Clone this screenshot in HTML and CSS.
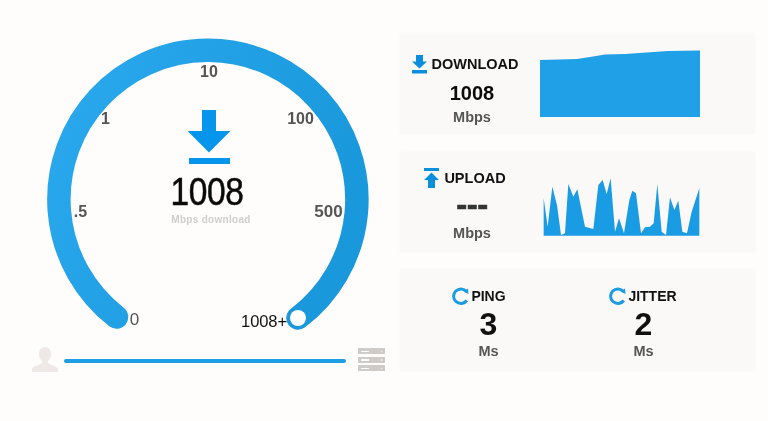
FILE: index.html
```html
<!DOCTYPE html>
<html lang="en">
<head>
<meta charset="utf-8">
<title>Speed test</title>
<link rel="stylesheet" href="styles.css">
</head>
<body>
<main class="page">
  <section class="left">
    <svg class="gauge" viewBox="0 0 400 335" width="400" height="335">
      <defs>
        <linearGradient id="arcGrad" x1="0" y1="0" x2="1" y2="0.4">
          <stop offset="0" stop-color="#2aa9ee"/>
          <stop offset="1" stop-color="#1998dc"/>
        </linearGradient>
      </defs>
      <path class="arc" d="M116.500 317 A149 149 0 1 1 298 318"/>
      <circle class="knob" cx="298" cy="318" r="8"/>
      <path class="big-icon" d="M202 110h14v21h14.500l-21.500 21.500-21.500-21.500h14.500z"/>
      <rect class="big-icon" x="189" y="158" width="41" height="6"/>
      <text class="tick" x="209" y="77" text-anchor="middle">10</text>
      <text class="tick" x="105.500" y="124" text-anchor="middle">1</text>
      <text class="tick" x="300.500" y="124" text-anchor="middle">100</text>
      <text class="tick" x="80.500" y="217" text-anchor="middle">.5</text>
      <text class="tick tick-wide" x="328.500" y="217" text-anchor="middle">500</text>
      <text class="tick-zero" x="134.500" y="325" text-anchor="middle">0</text>
      <text class="tick-max" x="264" y="327" text-anchor="middle">1008+</text>
      <text class="speed" transform="translate(207 205) scale(.86 1)" text-anchor="middle">1008</text>
      <text class="speed-unit" x="211" y="223" text-anchor="middle">Mbps download</text>
    </svg>
    <div class="route">
      <svg class="user" viewBox="0 0 26 25" width="26" height="25">
        <path d="M13 0c4 0 6 3 6 7 0 3-1 5-3 7v2c2 2 9 3 10 6v3H0v-3c1-3 8-4 10-6v-2c-2-2-3-4-3-7 0-4 2-7 6-7z"/>
      </svg>
      <div class="route-line"></div>
      <div class="server">
        <span class="server-unit"></span>
        <span class="server-unit"></span>
        <span class="server-unit"></span>
      </div>
    </div>
  </section>

  <section class="right">
    <article class="panel panel-download">
      <div class="info">
        <h2 class="title">
          <svg class="ico" viewBox="0 0 15 20" width="15" height="20"><path d="M4 1h7v6.500h4l-7.500 7L0 7.500h4z"/><rect y="16" width="15" height="3.500"/></svg>
          DOWNLOAD
        </h2>
        <div class="value shifted">1008</div>
        <div class="unit shifted">Mbps</div>
      </div>
      <svg class="chart chart-dl" viewBox="0 0 160 67" width="160" height="67">
        <path d="M0 10 37 9 50 7 65 4.500 85 4 128 1 160 .5V67H0z"/>
      </svg>
    </article>

    <article class="panel panel-upload">
      <div class="info">
        <h2 class="title">
          <svg class="ico" viewBox="0 0 15 20" width="15" height="20"><rect width="15" height="3" y="0"/><path d="M7.500 4.500 15 12h-4v8H4v-8H0z"/></svg>
          UPLOAD
        </h2>
        <div class="dashes shifted">---</div>
        <div class="unit shifted">Mbps</div>
      </div>
      <svg class="chart chart-ul" viewBox="0 0 510 225" width="170" height="75">
        <path d="M26 85 38 170 52 50 66 105 78 195 90 190 100 42 115 80 127 58 150 170 175 177 190 45 203 30 215 72 227 25 240 185 252 145 267 190 283 90 292 62 303 70 318 190 330 172 345 170 356 160 367 42 380 185 393 195 405 82 418 120 430 92 442 185 456 190 470 125 493 55V197H26z"/>
      </svg>
    </article>

    <article class="panel panel-latency">
      <div class="metric">
        <h2 class="title title-small title-ping">
          <svg class="ring" viewBox="0 0 18 18" width="18" height="18"><path d="M15.500 4.500A7.300 7.300 0 1 0 15.800 13.500"/><path class="ring-tip" d="M12.500 4.500 17 1.500 17.500 7z"/></svg>
          PING
        </h2>
        <div class="digit">3</div>
        <div class="unit">Ms</div>
      </div>
      <div class="metric">
        <h2 class="title title-small title-jitter">
          <svg class="ring" viewBox="0 0 18 18" width="18" height="18"><path d="M15.500 4.500A7.300 7.300 0 1 0 15.800 13.500"/><path class="ring-tip" d="M12.500 4.500 17 1.500 17.500 7z"/></svg>
          JITTER
        </h2>
        <div class="digit">2</div>
        <div class="unit">Ms</div>
      </div>
    </article>
  </section>
</main>
</body>
</html>
```
FILE: styles.css
```css
* { box-sizing: border-box; }
html, body { margin: 0; padding: 0; }
body {
  width: 768px;
  height: 421px;
  overflow: hidden;
  background: #fefdfc;
  font-family: "Liberation Sans", Arial, sans-serif;
}
.page {
  display: flex;
  width: 768px;
  height: 421px;
  filter: blur(0.35px);
}
.left {
  width: 400px;
  flex: none;
  display: flex;
  flex-direction: column;
}
.gauge { display: block; flex: none; }
.arc {
  fill: none;
  stroke: url(#arcGrad);
  stroke-width: 23.500;
  stroke-linecap: round;
}
.knob { fill: #fff; }
.big-icon { fill: #0596ec; }
.tick { font-size: 16px; font-weight: 700; fill: #555; }
.tick-wide { font-size: 17px; }
.tick-zero { font-size: 17px; fill: #555; }
.tick-max { font-size: 16.500px; fill: #111; letter-spacing: -.1px; }
.speed { font-size: 39px; fill: #0a0a0a; stroke: #0a0a0a; stroke-width: .5px; letter-spacing: -.5px; }
.speed-unit { font-size: 10px; font-weight: 700; fill: #d0cecd; letter-spacing: .3px; }
.route {
  display: flex;
  align-items: center;
  gap: 6px;
  padding: 12px 15px 0 32px;
}
.user { flex: none; display: block; fill: #eee9e7; }
.route-line {
  flex: 1;
  height: 4px;
  margin: 3px 6px 0 0;
  border-radius: 2px;
  background: #1e9fe4;
}
.server {
  flex: none;
  width: 27px;
  display: flex;
  flex-direction: column;
  gap: 2.500px;
}
.server-unit {
  display: block;
  height: 6px;
  background: #cfcbc9;
  position: relative;
}
.server-unit::before {
  content: "";
  position: absolute;
  left: 3px;
  top: 2.500px;
  width: 8px;
  height: 1.500px;
  background: #fbfafa;
}
.server-unit::after {
  content: "";
  position: absolute;
  right: 3px;
  top: 2.500px;
  width: 1.500px;
  height: 1.500px;
  background: #f3f1f0;
}
.right {
  width: 355px;
  padding-top: 33px;
  display: flex;
  flex-direction: column;
}
.panel {
  background: #fbf8f8;
  box-shadow: 0 0 4px #fbf8f8;
  display: flex;
}
.panel-download { height: 101px; margin-bottom: 18px; align-items: flex-start; }
.panel-upload { height: 100px; margin-bottom: 17px; align-items: flex-start; }
.panel-latency { height: 102px; }
.info {
  width: 130px;
  flex: none;
  display: flex;
  flex-direction: column;
  align-items: center;
}
.panel-download .info { padding-top: 21px; }
.panel-upload .info { padding-top: 16px; }
.title {
  margin: 0;
  height: 20px;
  display: flex;
  align-items: center;
  gap: 5px;
  font-size: 14.500px;
  line-height: 20px;
  font-weight: 700;
  color: #111;
}
.ico { display: block; fill: #0a8fdc; }
.value {
  margin-top: 7px;
  height: 24px;
  line-height: 24px;
  font-size: 20px;
  font-weight: 700;
  color: #0c0c0c;
}
.shifted { margin-left: 14px; }
.unit {
  height: 18px;
  line-height: 18px;
  font-size: 14.500px;
  font-weight: 700;
  color: #555;
}
.panel-download .unit { margin-top: 3px; }
.panel-upload .unit { margin-top: 7px; }
.dashes {
  height: 24px;
  margin-top: 5px;
  line-height: 24px;
  font-size: 33px;
  font-weight: 700;
  letter-spacing: -.5px;
  color: #333;
  -webkit-text-stroke: .6px #333;
}
.chart { display: block; flex: none; fill: #20a0e6; }
.chart-dl { margin: 17px 0 0 10px; }
.chart-ul { margin: 18px 0 0 5px; fill: #1a9ce5; }
.metric {
  width: 155px;
  display: flex;
  flex-direction: column;
  align-items: center;
  padding-top: 17px;
}
.metric:first-child { margin-left: 11px; }
.title-small { gap: 2px; font-size: 14px; }
.title-ping { margin-right: 20px; }
.title-jitter { margin-right: 2px; }
.ring { display: block; fill: none; stroke: #1b9ce2; stroke-width: 3px; }
.ring-tip { fill: #1b9ce2; stroke: none; }
.digit {
  height: 35px;
  margin-top: 1px;
  line-height: 35px;
  font-size: 32px;
  font-weight: 700;
  color: #111;
}
.metric .unit { margin-top: 0; }
```
